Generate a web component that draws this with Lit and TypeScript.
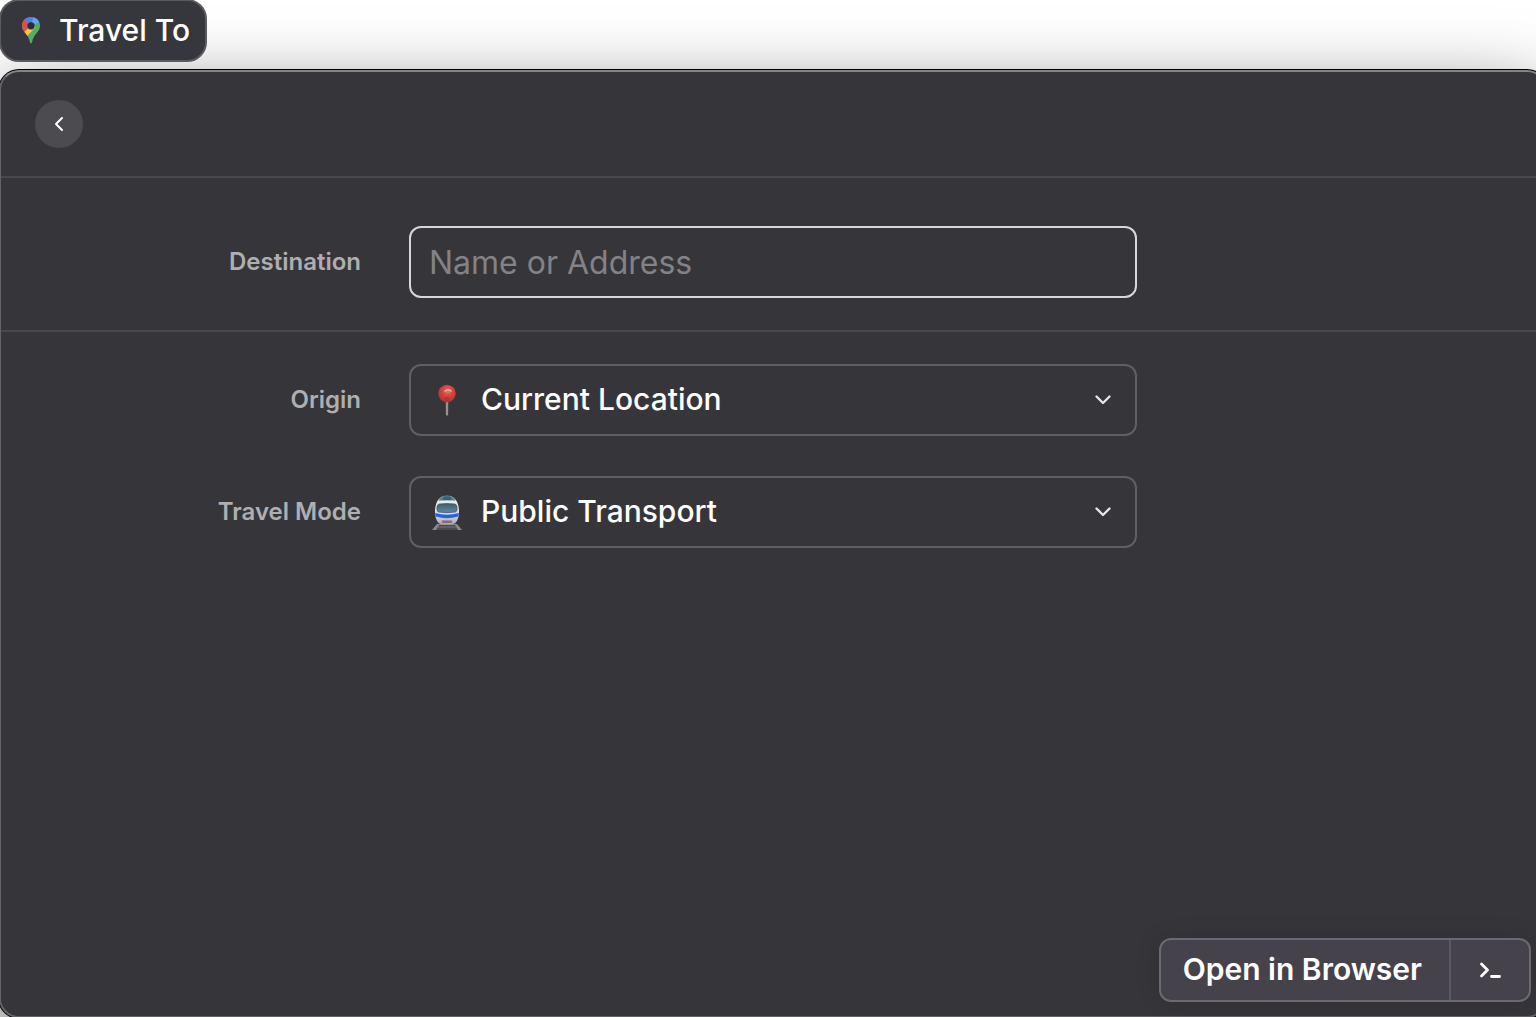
import { LitElement, css, html, svg } from "lit";
import { customElement, state } from "lit/decorators.js";

const mapsIcon = html`
  <svg class="maps" viewBox="0 0 20 28" aria-hidden="true">
    <defs>
      <clipPath id="maps-shape">
        <path d="M10 1C4.900 1 1 4.900 1 9.800c0 2.600 1 4.400 2.500 6.200 2.900 3.600 4.700 6 5.400 9.700.2 1.100.5 1.500 1.100 1.500s.9-.4 1.100-1.500c.7-3.700 2.500-6.100 5.400-9.700C18 14.200 19 12.400 19 9.800 19 4.900 15.100 1 10 1z" />
      </clipPath>
    </defs>
    <g clip-path="url(#maps-shape)">
      <rect width="20" height="28" fill="#53ad62" />
      <path d="M0 3.500 3.400 3 10 9.800 1.500 18.500 0 16z" fill="#dd5144" />
      <path d="M10 9.800 1.800 17.200 5 21.500 14.500 11z" fill="#f5c244" />
      <path d="M3.200 3.400 6 0h7L10 9.800z" fill="#4a80e8" />
      <path d="M12.700 0 20 0v5.800L10 9.800z" fill="#6b9df3" />
    </g>
    <circle cx="10" cy="9.800" r="3.600" fill="#2b2c38" />
  </svg>
`;

const pinIcon = html`
  <svg class="emoji" viewBox="0 0 36 36" aria-hidden="true">
    <defs>
      <radialGradient id="pin-ball" cx=".55" cy=".35" r=".65">
        <stop offset="0" stop-color="#f58078" />
        <stop offset=".35" stop-color="#dc4a43" />
        <stop offset="1" stop-color="#b4322f" />
      </radialGradient>
      <linearGradient id="pin-stem">
        <stop offset="0" stop-color="#6f655f" />
        <stop offset=".5" stop-color="#b3a69c" />
        <stop offset="1" stop-color="#6f655f" />
      </linearGradient>
    </defs>
    <path d="M16.500 18h3l-.3 14.500q-1.200 2.500-2.400 0z" fill="url(#pin-stem)" />
    <circle cx="18" cy="11.500" r="8.700" fill="url(#pin-ball)" />
    <path d="M15.500 18.500v-2.800q2.500-1.800 5 0v2.800q-2.500 1.600-5 0z" fill="#a83530" opacity=".7" />
    <path d="M16 9q3-2.500 6 0" fill="none" stroke="#ffc4bd" stroke-width="1.600" stroke-linecap="round" opacity=".8" />
  </svg>
`;

const trainIcon = html`
  <svg class="emoji" viewBox="0 0 36 36" aria-hidden="true">
    <defs>
      <linearGradient id="train-glass" x2="0" y2="1">
        <stop offset="0" stop-color="#3d5f70" />
        <stop offset="1" stop-color="#64889b" />
      </linearGradient>
      <linearGradient id="train-body" x2="0" y2="1">
        <stop offset="0" stop-color="#8b999f" />
        <stop offset=".2" stop-color="#e9ebec" />
        <stop offset=".7" stop-color="#d3d5d9" />
        <stop offset="1" stop-color="#a4a6ac" />
      </linearGradient>
    </defs>
    <path d="M8 30h20l5 6H3z" fill="#8a8a8b" />
    <path d="M10 31h16l3 5H7z" fill="#4b4b4e" />
    <path d="M9 33h18" stroke="#77777a" stroke-width="1" />
    <path d="M18 1.500C12.500 1.500 9 5 7.300 9.500 6 13 5.800 16 6.100 20c.3 4 1.700 7 3.600 9.200C12 31 24 31 26.300 29.200 28.200 27 29.600 24 29.900 20c.3-4 .1-7-1.200-10.500C27 5 23.500 1.500 18 1.500z" fill="url(#train-body)" />
    <path d="M18 2c-4.200 0-6.800 1.900-8.400 4.700q8.400-1.400 16.800 0C24.800 3.900 22.200 2 18 2z" fill="#567b8e" />
    <path d="M14.500 2.400h7l.8 3.800h-8.600z" fill="#3a6074" />
    <path d="M10 10q8-.9 16 0 1.700.5 2 3c.3 2.600-.2 4.600-1.600 5q-8.400 1.300-16.800 0c-1.400-.4-1.900-2.400-1.600-5q.3-2.500 2-3z" fill="url(#train-glass)" stroke="#3a5361" stroke-width=".7" />
    <path d="M6.100 19q11.900 3.400 23.800 0l-.7 3.600q-11.200 3.200-22.400 0z" fill="#2860e0" />
    <rect x="13" y="26.500" width="10" height="2.400" rx="1" fill="#70757c" />
    <circle cx="13.800" cy="27.700" r="1.100" fill="#dd514b" />
    <circle cx="22.200" cy="27.700" r="1.100" fill="#dd514b" />
  </svg>
`;

const stroke = (d: string, cls: string) => html`
  <svg class=${cls} viewBox="0 0 24 24" aria-hidden="true">${svg`<path d=${d} />`}</svg>
`;

@customElement("app-root")
export class AppRoot extends LitElement {
  @state() private destination = "";

  static styles = css`
    :host {
      display: flex;
      flex-direction: column;
      gap: 8px;
      min-height: 100vh;
      box-sizing: border-box;
      overflow: hidden;
      background: #fff;
      color: #fff;
      font-family: Inter, "Liberation Sans", sans-serif;
      font-size: 30px;
      line-height: 36px;
      font-weight: 500;
    }
    *, *::before, *::after { box-sizing: border-box; }
    button, input, select { font: inherit; color: inherit; margin: 0; }
    svg { display: block; flex: none; }

    .tag {
      z-index: 1;
      align-self: flex-start;
      display: flex;
      align-items: center;
      gap: 18px;
      height: 63px;
      margin: -1px 0 0 -1px;
      padding: 0 15px 2px 20px;
      border: 2px solid #5b5a5f;
      border-radius: 20px;
      background: #36373c;
    }
    .tag h1 { margin: 0; font: inherit; }
    .maps { width: 20px; height: 28px; }

    .panel {
      flex: 1;
      display: flex;
      flex-direction: column;
      margin: 0 -11px -1px -1px;
      border: 2px solid #646368;
      border-top-color: #858488;
      border-radius: 20px;
      background: #36353a;
      box-shadow: 0 0 0 1px #000, 0 30px 80px rgba(0, 0, 0, 0.65);
    }
    .bar {
      padding: 28px 34px;
      border-bottom: 2px solid #49484d;
    }
    .back {
      display: grid;
      place-items: center;
      width: 48px;
      height: 48px;
      padding: 0;
      border: 0;
      border-radius: 50%;
      background: #4c4b50;
    }
    .group {
      display: flex;
      flex-direction: column;
      gap: 40px;
      padding: 32px 0;
    }
    .group.first {
      padding-top: 48px;
      border-bottom: 2px solid #49484d;
    }
    .row {
      display: grid;
      grid-template-columns: 1fr minmax(0, 728px) 1fr;
      align-items: center;
      column-gap: 48px;
    }
    .row label {
      text-align: right;
      font-size: 24px;
      line-height: 32px;
      font-weight: 600;
      color: #afaeb1;
    }
    .field {
      width: 100%;
      height: 72px;
      padding: 0 18px;
      border: 2px solid #605f64;
      border-radius: 12px;
      background: transparent;
      outline: none;
    }
    input.field {
      border-color: #d7d7d8;
      font-size: 32px;
      font-weight: 400;
    }
    input.field::placeholder { color: #838286; opacity: 1; }
    .select {
      display: grid;
      grid-template-columns: 20px 36px 1fr 24px 22px;
      align-items: center;
    }
    .select .field {
      grid-area: 1 / 1 / 2 / 6;
      appearance: none;
      padding: 0 60px 2px 70px;
    }
    .select option { background: #36353a; }
    .emoji, .chevron { pointer-events: none; }
    .emoji { grid-area: 1 / 2; width: 36px; height: 36px; }
    .chevron { grid-area: 1 / 4; }
    .arrow, .chevron, .prompt {
      width: 24px;
      height: 24px;
      fill: none;
      stroke: #fff;
      stroke-width: 2;
      stroke-linecap: round;
      stroke-linejoin: round;
    }
    .chevron { stroke: #e6e6e7; stroke-width: 2.400; }
    .prompt { stroke-width: 2.800; }

    .actions {
      display: flex;
      align-self: flex-end;
      height: 64px;
      margin: auto 14px 14px;
      border: 2px solid #6b6a70;
      border-radius: 12px;
      background: #45424c;
      box-shadow: 0 0 24px rgba(0, 0, 0, 0.12);
    }
    .actions button {
      display: grid;
      place-items: center;
      border: 0;
      background: none;
      padding: 0 27px 2px 22px;
      font-weight: 600;
    }
    .actions .terminal {
      padding: 0 27px;
      border-left: 2px solid #5b5961;
    }
  `;

  render() {
    return html`
      <header class="tag">${mapsIcon}<h1>Travel To</h1></header>
      <main class="panel">
        <nav class="bar">
          <button class="back" type="button" aria-label="Back">
            ${stroke("M15 6 9 12l6 6", "arrow")}
          </button>
        </nav>
        <section class="group first">
          <div class="row">
            <label for="destination">Destination</label>
            <input
              id="destination"
              class="field"
              type="text"
              placeholder="Name or Address"
              .value=${this.destination}
              @input=${(e: Event) => (this.destination = (e.target as HTMLInputElement).value)}
            />
          </div>
        </section>
        <section class="group">
          <div class="row">
            <label for="origin">Origin</label>
            <div class="select">
              <select id="origin" class="field"><option>Current Location</option></select>
              ${pinIcon}${stroke("M5.500 8.500 12 15l6.500-6.500", "chevron")}
            </div>
          </div>
          <div class="row">
            <label for="mode">Travel Mode</label>
            <div class="select">
              <select id="mode" class="field"><option>Public Transport</option></select>
              ${trainIcon}${stroke("M5.500 8.500 12 15l6.500-6.500", "chevron")}
            </div>
          </div>
        </section>
        <footer class="actions">
          <button type="button">Open in Browser</button>
          <button class="terminal" type="button" aria-label="Open in terminal">
            ${stroke("M3.500 6l6 6-6 6M13.500 18.500h8", "prompt")}
          </button>
        </footer>
      </main>
    `;
  }
}
